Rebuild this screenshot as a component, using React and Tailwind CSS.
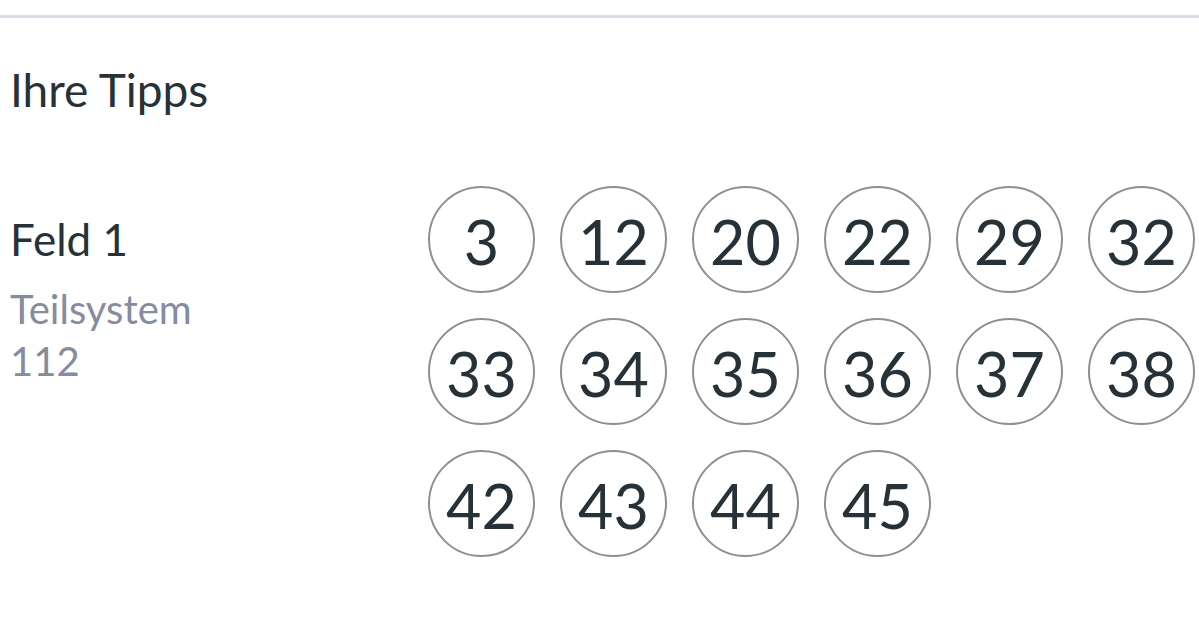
export default function App() {
  const tips = [3, 12, 20, 22, 29, 32, 33, 34, 35, 36, 37, 38, 42, 43, 44, 45];

  return (
    <div className="w-[1199px] h-[628px] bg-white overflow-hidden font-['Lato','Liberation_Sans',sans-serif] text-[#263238]">
      <div className="mt-[15px] h-[3px] bg-[#dcdce8]" />
      <h2 className="pl-[10px] mt-[46px] text-[46px] leading-[52px] font-normal">Ihre Tipps</h2>

      <div className="flex mt-[70px]">
        <div className="w-[428px] shrink-0 pl-[10px] pt-[27px]">
          <p className="text-[44px] leading-[52px]">Feld 1</p>
          <p className="mt-[18px] text-[40px] leading-[52px] text-[#868c9e]">
            Teilsystem
            <br />
            112
          </p>
        </div>
        <div className="grid grid-cols-[repeat(6,107px)] gap-[25px]">
          {tips.map((n) => (
            <div
              key={n}
              className="w-[107px] h-[107px] rounded-full border-[2.5px] border-[#8c9093] flex items-center justify-center pt-[4px] text-[61px] leading-none"
            >
              {n}
            </div>
          ))}
        </div>
      </div>
    </div>
  );
}
